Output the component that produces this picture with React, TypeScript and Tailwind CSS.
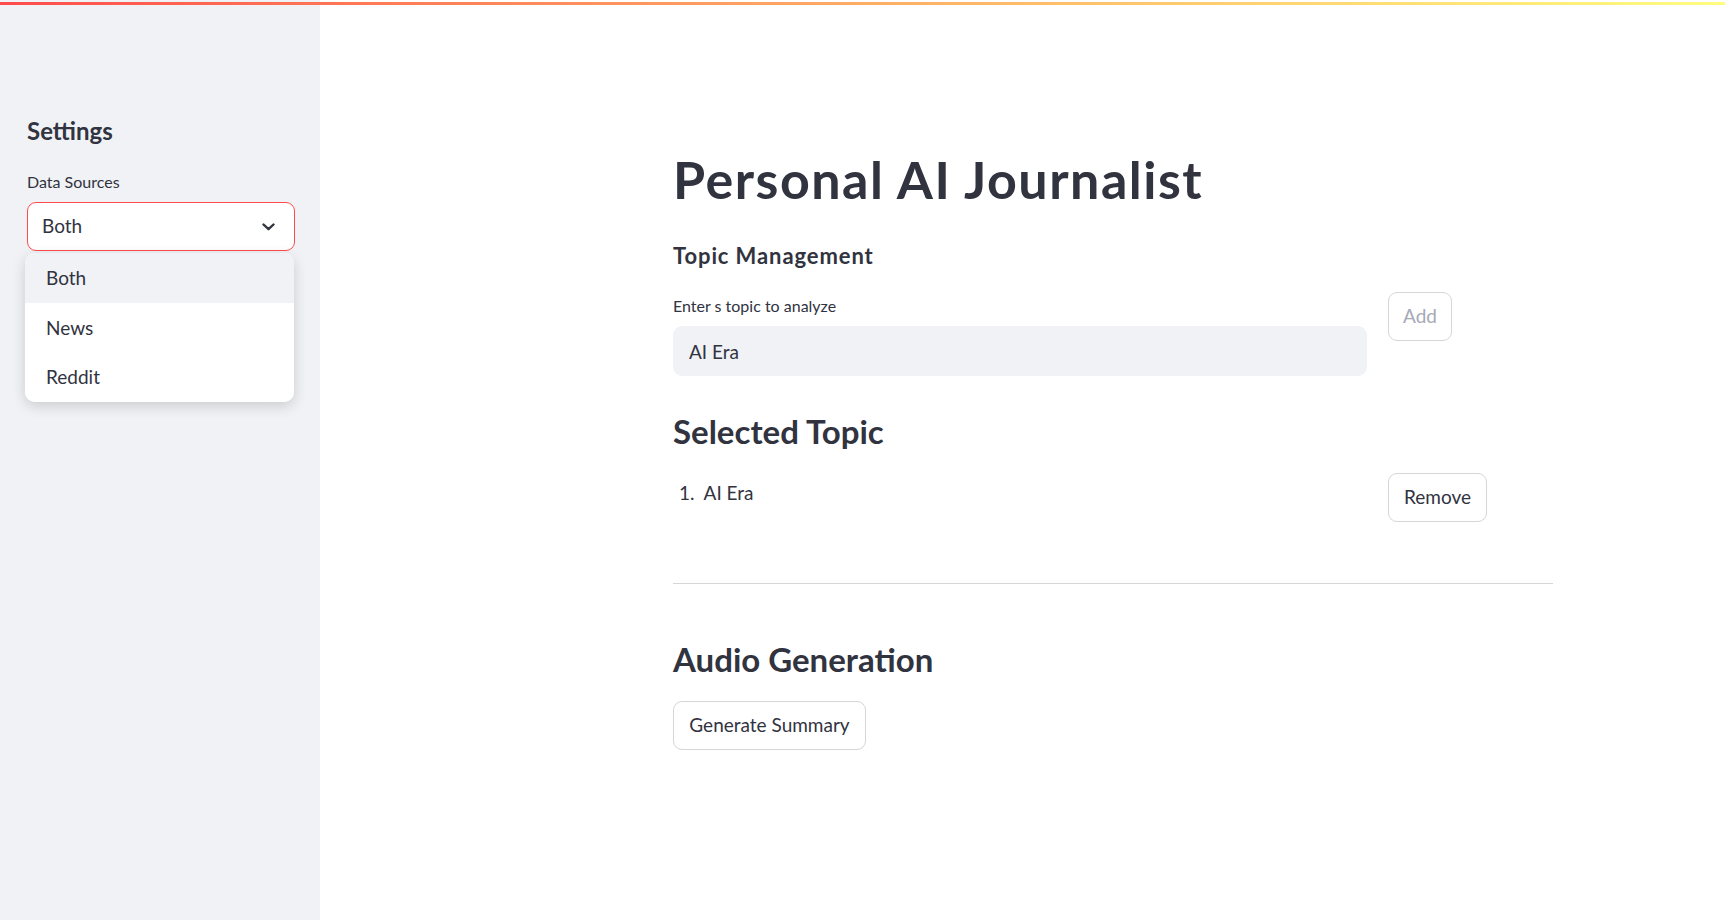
import { useState } from "react";

const options = ["Both", "News", "Reddit"];

function Chevron() {
  return (
    <svg width="13" height="8" viewBox="0 0 13 8" fill="none">
      <path
        d="M1.5 1.5 L6.5 6.2 L11.5 1.5"
        stroke="#31333f"
        strokeWidth="2.4"
        strokeLinecap="round"
        strokeLinejoin="round"
      />
    </svg>
  );
}

function Sidebar() {
  const [source, setSource] = useState("Both");
  const [open, setOpen] = useState(true);

  return (
    <aside className="w-[320px] shrink-0 bg-[#f0f2f6] px-[27px] pt-[116px]">
      <h2 className="text-[24px] leading-[29px] font-bold">Settings</h2>

      <div className="mt-[28px] text-[16px] leading-[18px]">Data Sources</div>

      <div className="relative mt-[11px]">
        <button
          onClick={() => setOpen(!open)}
          className="flex h-[49px] w-[268px] items-center justify-between rounded-[9px] border border-[#ff4b4b] bg-white pl-[14px] pr-[19px] text-[19px]"
        >
          <span>{source}</span>
          <Chevron />
        </button>

        {open && (
          <div className="absolute left-[-2px] top-[51px] w-[269px] overflow-hidden rounded-[10px] bg-white shadow-[0_4px_14px_rgba(0,0,0,0.16)]">
            {options.map((o, i) => (
              <div
                key={o}
                onClick={() => {
                  setSource(o);
                  setOpen(false);
                }}
                className={
                  "flex items-center pl-[21px] text-[19px] " +
                  (i === 2 ? "h-[49px] " : "h-[50px] ") +
                  (o === source ? "bg-[#f0f2f6]" : "bg-white")
                }
              >
                {o}
              </div>
            ))}
          </div>
        )}
      </div>
    </aside>
  );
}

export default function App() {
  const [topic, setTopic] = useState("AI Era");

  return (
    <div className="relative flex h-[920px] w-full overflow-hidden bg-white font-['Lato',sans-serif] text-[#31333f]">
      <div className="absolute left-0 right-0 top-[2px] h-[3px] bg-gradient-to-r from-[#ff4b4b] to-[#fffd80]" />

      <Sidebar />

      <main className="flex-1 pl-[353px] pt-[149px]">
        <div className="w-[880px]">
          <h1 className="text-[52px] leading-[60px] font-bold tracking-[1.5px]">
            Personal AI Journalist
          </h1>

          <h3 className="mt-[35px] text-[22px] leading-[24px] font-bold tracking-[0.9px]">
            Topic Management
          </h3>

          <div className="mt-[24px] flex">
            <div className="w-[694px] pt-[5px]">
              <div className="text-[16px] leading-[18px]">
                Enter s topic to analyze
              </div>
              <input
                value={topic}
                onChange={(e) => setTopic(e.target.value)}
                className="mt-[11px] h-[50px] w-full rounded-[9px] bg-[#f0f2f6] px-[16px] text-[19px] outline-none"
              />
            </div>
            <div className="ml-[21px]">
              <button className="h-[49px] w-[64px] rounded-[9px] border border-[#d6d6d9] bg-white text-[19px] text-[#a6a9b6]">
                Add
              </button>
            </div>
          </div>

          <h2 className="mt-[35px] text-[33px] leading-[40px] font-bold">
            Selected Topic
          </h2>

          <div className="mt-[22px] flex">
            <div className="w-[694px] pt-[9px] pl-[6px] text-[19px] leading-[21px]">
              <span>1.</span>
              <span className="ml-[9px]">AI Era</span>
            </div>
            <div className="ml-[21px]">
              <button className="h-[49px] w-[99px] rounded-[9px] border border-[#d6d6d9] bg-white text-[19px]">
                Remove
              </button>
            </div>
          </div>

          <div className="mt-[61px] h-px bg-[#d6d6d9]" />

          <h2 className="mt-[55px] text-[33px] leading-[41px] font-bold">
            Audio Generation
          </h2>

          <button className="mt-[21px] h-[49px] w-[193px] rounded-[9px] border border-[#d6d6d9] bg-white text-[19px]">
            Generate Summary
          </button>
        </div>
      </main>
    </div>
  );
}
